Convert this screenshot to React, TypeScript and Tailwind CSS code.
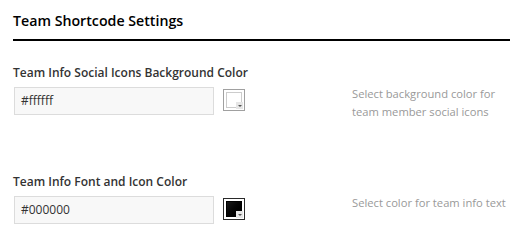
import React from "react";

function Swatch({ color }: { color: "white" | "black" }) {
  const white = color === "white";
  return (
    <div
      className={`relative mt-[2px] ml-[9px] h-[22px] w-[22px] shrink-0 border bg-white p-[2px] ${
        white ? "border-[#a0a0a0]" : "border-[#2a2a2a]"
      }`}
    >
      <div
        className={`h-full w-full border ${
          white ? "border-[#cccccc] bg-white" : "border-black bg-gradient-to-br from-[#1a1a1a] to-black"
        }`}
      />
      <div className="absolute bottom-[1px] right-[1px] flex h-[7px] w-[7px] items-center justify-center bg-[#e6e6e6]">
        <div className="h-0 w-0 border-x-[2px] border-t-[2px] border-x-transparent border-t-[#555]" />
      </div>
    </div>
  );
}

function Field({
  label,
  value,
  color,
  desc,
}: {
  label: string;
  value: string;
  color: "white" | "black";
  desc: React.ReactNode;
}) {
  return (
    <div>
      <div className="text-[12px] font-semibold leading-[16px] text-[#333]">{label}</div>
      <div className="mt-[6px] flex items-start">
        <div className="ml-[1px] flex h-[28px] w-[200px] shrink-0 items-center border border-[#dcdcdc] bg-[#f8f8f8] pl-[6px] text-[12px] text-[#333]">
          {value}
        </div>
        <Swatch color={color} />
        <div className="-mt-[2px] ml-[107px] whitespace-nowrap text-[11.2px] leading-[18px] text-[#999]">
          {desc}
        </div>
      </div>
    </div>
  );
}

export default function App() {
  return (
    <div
      className="h-[245px] w-[525px] bg-white pl-[13px]"
      style={{ fontFamily: '"Open Sans", "Liberation Sans", sans-serif' }}
    >
      <div className="w-[497px]">
        <h2 className="border-b-2 border-black pb-[8px] pt-[11px] text-[14.2px] font-semibold leading-[20px] text-black">
          Team Shortcode Settings
        </h2>
        <div className="mt-[24px]">
          <Field
            label="Team Info Social Icons Background Color"
            value="#ffffff"
            color="white"
            desc={
              <>
                Select background color for
                <br />
                team member social icons
              </>
            }
          />
        </div>
        <div className="mt-[53px]">
          <Field
            label="Team Info Font and Icon Color"
            value="#000000"
            color="black"
            desc="Select color for team info text"
          />
        </div>
      </div>
    </div>
  );
}
